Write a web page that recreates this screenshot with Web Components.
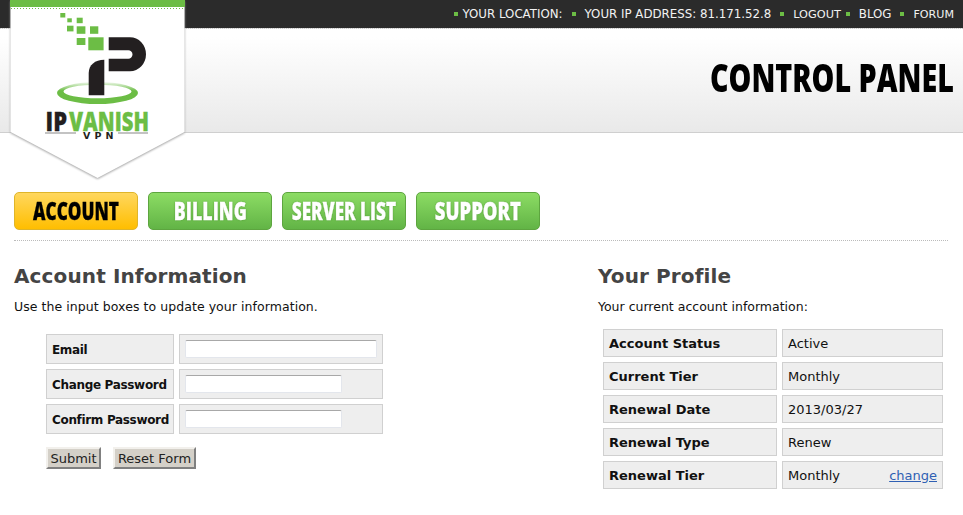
<!DOCTYPE html>
<html lang="en">
<head>
<meta charset="utf-8">
<title>Control Panel</title>
<style>
  html, body { margin: 0; background: #fff; }
  body { font: 13px "DejaVu Sans", Verdana, sans-serif; color: #111; overflow: hidden; }
</style>
</head>
<body>
<ip-logo></ip-logo>
<ip-topbar>
  <ip-topitem pad="5">YOUR LOCATION:</ip-topitem>
  <ip-topitem gap="9" pad="9">YOUR IP ADDRESS: 81.171.52.8</ip-topitem>
  <ip-topitem gap="9" pad="9" size="11.3">LOGOUT</ip-topitem>
  <ip-topitem gap="5" pad="9">BLOG</ip-topitem>
  <ip-topitem gap="9" pad="9" size="11.1">FORUM</ip-topitem>
</ip-topbar>
<ip-header>CONTROL PANEL</ip-header>
<ip-nav>
  <nav-tab active squeeze=".715">ACCOUNT</nav-tab>
  <nav-tab squeeze=".74">BILLING</nav-tab>
  <nav-tab squeeze=".715">SERVER LIST</nav-tab>
  <nav-tab squeeze=".77">SUPPORT</nav-tab>
</ip-nav>
<ip-main>
  <info-section heading="Account Information" intro="Use the input boxes to update your information." style="--intro-track: .06px">
    <account-form></account-form>
  </info-section>
  <info-section heading="Your Profile" intro="Your current account information:">
    <profile-table>
      <profile-row label="Account Status">Active</profile-row>
      <profile-row label="Current Tier">Monthly</profile-row>
      <profile-row label="Renewal Date">2013/03/27</profile-row>
      <profile-row label="Renewal Type">Renew</profile-row>
      <profile-row label="Renewal Tier" link="change">Monthly</profile-row>
    </profile-table>
  </info-section>
</ip-main>

<script>
const headFont = '"Open Sans", "Liberation Sans", sans-serif';

class IpLogo extends HTMLElement {
  constructor() {
    super();
    this.attachShadow({ mode: "open" }).innerHTML = `
      <style>
        :host { position: absolute; left: 0; top: 0; width: 200px; height: 185px; z-index: 2; display: block; }
        svg { display: block; }
        .shield { filter: drop-shadow(0 1px 1px #a0a0a0); }
        .brand { font: 800 26px "Open Sans", sans-serif; stroke-width: .3px; }
        .vpn { font: bold 9.5px "DejaVu Sans", sans-serif; fill: #231f20; }
      </style>
      <svg width="200" height="185" viewBox="0 0 200 185">
        <defs>
          <linearGradient id="ring" x1="0" y1="0" x2="0" y2="1">
            <stop offset="0" stop-color="#6cbd45" stop-opacity=".1"/>
            <stop offset=".4" stop-color="#6cbd45"/>
            <stop offset="1" stop-color="#6cbd45"/>
          </linearGradient>
        </defs>
        <path class="shield" d="M10.500 0H184.500V132L97.500 178L10.500 132Z" fill="#fff"/>
        <rect x="10" y="0" width="175" height="7" fill="#6cbd45"/>
        <line x1="11" y1="8.500" x2="184" y2="8.500" stroke="#6cbd45" stroke-width="1" stroke-dasharray="1 2"/>
        <g fill="#6cbd45">
          <rect x="60.300" y="13" width="5" height="4.500"/>
          <rect x="67.300" y="18.300" width="4.500" height="4"/>
          <rect x="76.700" y="17.700" width="6" height="5.500"/>
          <rect x="67" y="25.700" width="6.500" height="5.700"/>
          <rect x="76.700" y="26.300" width="8.700" height="7.500"/>
          <rect x="90" y="26.300" width="8.300" height="7.500"/>
          <rect x="76.700" y="38" width="8.700" height="7"/>
          <rect x="88.300" y="37.300" width="15.300" height="13"/>
        </g>
        <path fill-rule="evenodd" fill="url(#ring)" d="M57 93a40.500 11 0 1 0 81 0a40.500 11 0 1 0 -81 0ZM63.500 91.500a34 6.700 0 1 0 68 0a34 6.700 0 1 0 -68 0Z"/>
        <g fill="#231f20">
          <path d="M108.700 37.300H130A16 17 0 0 1 130 71.300H108.700V58.700H128.300A4.200 4.200 0 0 0 128.300 50.300H108.700Z"/>
          <path d="M88.700 95.300V73C88.700 65 95 59.700 104.300 59.700V95.300Z"/>
        </g>
        <text class="brand" x="45.500" y="130.500" fill="#231f20" stroke="#231f20" textLength="21.500" lengthAdjust="spacingAndGlyphs">IP</text>
        <text class="brand" x="69" y="130.500" fill="#6cbd45" stroke="#6cbd45" textLength="80" lengthAdjust="spacingAndGlyphs">VANISH</text>
        <rect x="45" y="132.500" width="31" height="1" fill="#888"/>
        <rect x="118" y="132.500" width="30" height="1" fill="#888"/>
        <text class="vpn" x="83" y="139" textLength="30.500">VPN</text>
      </svg>`;
  }
}

class IpTopbar extends HTMLElement {
  constructor() {
    super();
    this.attachShadow({ mode: "open" }).innerHTML = `
      <style>
        :host {
          display: flex; justify-content: flex-end; align-items: center;
          height: 28px; padding-right: 9px; background: #2b2b2b; color: #f2f2f2;
          font: 11.8px "DejaVu Sans", Verdana, sans-serif;
        }
      </style>
      <slot></slot>`;
  }
}

class IpTopitem extends HTMLElement {
  constructor() {
    super();
    const gap = this.getAttribute("gap") || 0;
    const pad = this.getAttribute("pad") || 0;
    const size = this.getAttribute("size");
    this.attachShadow({ mode: "open" }).innerHTML = `
      <style>
        :host { display: flex; align-items: center; margin-left: ${gap}px; white-space: nowrap; ${size ? `font-size: ${size}px;` : ""} }
        i { width: 4px; height: 4px; background: #6cbd45; margin-right: ${pad}px; }
      </style>
      <i></i><slot></slot>`;
  }
}

class IpHeader extends HTMLElement {
  constructor() {
    super();
    this.attachShadow({ mode: "open" }).innerHTML = `
      <style>
        :host {
          display: flex; justify-content: flex-end; align-items: center; box-sizing: border-box;
          height: 105px; padding: 0 9px 8px 0;
          border-top: 1px dotted #c8c8c8; border-bottom: 1px solid #cfcfcf;
          background: linear-gradient(#fff 8%, #e9e9e9 100%);
        }
        h1 {
          margin: 0; font: 800 39px ${headFont}; color: #000; white-space: nowrap;
          transform: scaleX(.735); transform-origin: right center;
        }
      </style>
      <h1><slot></slot></h1>`;
  }
}

class IpNav extends HTMLElement {
  constructor() {
    super();
    this.attachShadow({ mode: "open" }).innerHTML = `
      <style>
        :host {
          display: flex; gap: 10px; margin: 59px 15px 0 14px; padding-bottom: 10px;
          border-bottom: 1px dotted #bbb;
        }
      </style>
      <slot></slot>`;
  }
}

class NavTab extends HTMLElement {
  constructor() {
    super();
    const squeeze = this.getAttribute("squeeze") || ".72";
    this.attachShadow({ mode: "open" }).innerHTML = `
      <style>
        :host {
          display: flex; justify-content: center; align-items: center; box-sizing: border-box;
          width: 124px; height: 38px; padding-bottom: 2px; border-radius: 5px; cursor: pointer;
          border: 1px solid #5da53f; color: #fff;
          background: linear-gradient(#8cdc64, #62b446);
          font: 800 24px ${headFont}; -webkit-text-stroke: .3px currentColor;
          text-shadow: 0 0 2px rgba(50, 110, 30, .7);
        }
        :host([active]) {
          border-color: #dfb52a; color: #000; text-shadow: none;
          background: linear-gradient(#ffd75e, #ffbe00);
        }
        span { flex: none; white-space: nowrap; transform: scaleX(${squeeze}); }
      </style>
      <span><slot></slot></span>`;
  }
}

class IpMain extends HTMLElement {
  constructor() {
    super();
    this.attachShadow({ mode: "open" }).innerHTML = `
      <style>
        :host { display: grid; grid-template-columns: 584px 1fr; padding: 22px 20px 0 14px; }
      </style>
      <slot></slot>`;
  }
}

class InfoSection extends HTMLElement {
  constructor() {
    super();
    this.attachShadow({ mode: "open" }).innerHTML = `
      <style>
        :host { display: block; }
        h2 { margin: 0; font: bold 20px/26px "DejaVu Sans", Verdana, sans-serif; color: #444; letter-spacing: .12px; }
        p { margin: 10px 0 0; font-size: 12.5px; line-height: 16px; color: #111; letter-spacing: var(--intro-track, 0); }
      </style>
      <h2>${this.getAttribute("heading")}</h2>
      <p>${this.getAttribute("intro")}</p>
      <slot></slot>`;
  }
}

class AccountForm extends HTMLElement {
  constructor() {
    super();
    this.attachShadow({ mode: "open" }).innerHTML = `
      <style>
        :host { display: block; margin: 19px 0 0 32px; }
        .rows { display: grid; grid-template-columns: 128px 204px; gap: 5px; }
        .cell {
          box-sizing: border-box; height: 30px; display: flex; align-items: center;
          background: #eee; border: 1px solid #d0d0d0;
        }
        .label { padding: 2px 0 0 5px; font-weight: bold; font-size: 12px; white-space: nowrap; letter-spacing: -.33px; }
        .field { padding-left: 5px; }
        input {
          box-sizing: border-box; height: 18px; width: 157px; margin: 0; padding: 0 2px;
          background: #fff; border: 1px solid #e3e6ec; border-top-color: #a8a8a8; border-radius: 2px;
        }
        input.wide { width: 192px; }
        .actions { display: flex; gap: 12px; margin-top: 13px; }
        button {
          box-sizing: border-box; height: 22px; padding: 0; background: #d4d0c8; color: #222;
          font: 13px "DejaVu Sans", Verdana, sans-serif;
          border: 2px solid; border-color: #f2f0ec #808080 #808080 #f2f0ec;
        }
        .submit { width: 55px; }
        .reset { width: 83px; }
      </style>
      <div class="rows">
        <div class="cell label">Email</div>
        <div class="cell field"><input class="wide" type="text" aria-label="Email"></div>
        <div class="cell label">Change Password</div>
        <div class="cell field"><input type="password" aria-label="Change Password"></div>
        <div class="cell label">Confirm Password</div>
        <div class="cell field"><input type="password" aria-label="Confirm Password"></div>
      </div>
      <div class="actions">
        <button class="submit">Submit</button>
        <button class="reset">Reset Form</button>
      </div>`;
  }
}

class ProfileTable extends HTMLElement {
  constructor() {
    super();
    this.attachShadow({ mode: "open" }).innerHTML = `
      <style>
        :host { display: grid; gap: 5px; margin: 14px 0 0 5px; width: 340px; }
      </style>
      <slot></slot>`;
  }
}

class ProfileRow extends HTMLElement {
  constructor() {
    super();
    const link = this.getAttribute("link");
    this.attachShadow({ mode: "open" }).innerHTML = `
      <style>
        :host { display: grid; grid-template-columns: 174px 161px; gap: 5px; }
        div {
          box-sizing: border-box; height: 28px; display: flex; align-items: center;
          justify-content: space-between; padding: 0 5px;
          background: #eee; border: 1px solid #d0d0d0; font-size: 13px;
        }
        .label { font-weight: bold; }
        a { color: #2f5fb3; text-decoration: underline; }
      </style>
      <div class="label">${this.getAttribute("label")}</div>
      <div><span><slot></slot></span>${link ? `<a href="#">${link}</a>` : ""}</div>`;
  }
}

customElements.define("ip-logo", IpLogo);
customElements.define("ip-topbar", IpTopbar);
customElements.define("ip-topitem", IpTopitem);
customElements.define("ip-header", IpHeader);
customElements.define("ip-nav", IpNav);
customElements.define("nav-tab", NavTab);
customElements.define("ip-main", IpMain);
customElements.define("info-section", InfoSection);
customElements.define("account-form", AccountForm);
customElements.define("profile-table", ProfileTable);
customElements.define("profile-row", ProfileRow);
</script>
</body>
</html>
